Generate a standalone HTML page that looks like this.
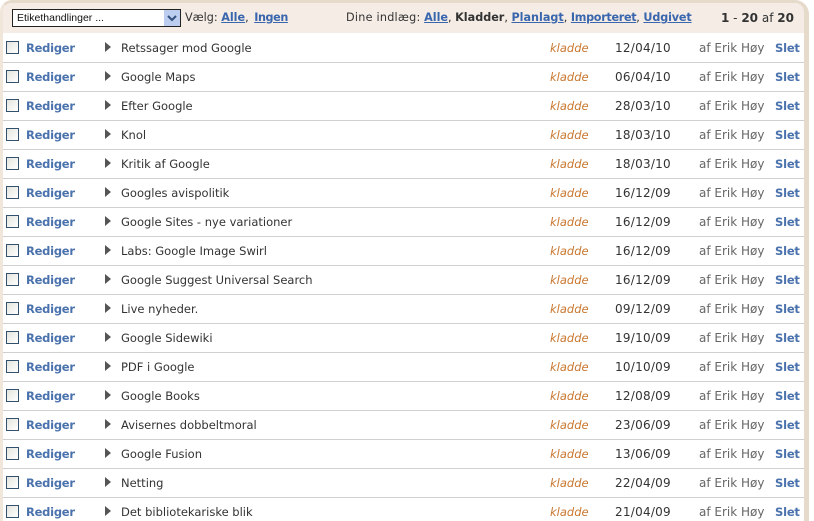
<!DOCTYPE html>
<html>
<head>
<meta charset="utf-8">
<style>
html,body{margin:0;padding:0;background:#fff;width:814px;height:521px;overflow:hidden;}
body{position:relative;font-family:"DejaVu Sans",sans-serif;font-size:11.2px;color:#333;}
.frame{position:absolute;left:0;top:0;width:809px;height:521px;box-sizing:border-box;border-style:solid;border-color:#e6dacb;border-width:3px 5px 0 3px;border-left-color:#f1e6da;border-radius:12px 14px 0 0;background:#fff;}
.head{position:absolute;left:3px;top:3px;width:801px;height:30px;background:#f4ece5;border-radius:9px 9px 0 0;}
.t{position:absolute;white-space:nowrap;line-height:14px;}
a{color:#3a66ad;font-weight:bold;text-decoration:underline;}
.sel{position:absolute;left:12px;top:9px;width:169px;height:18px;box-sizing:border-box;border:1px solid #222;background:#fff;font:10.5px "Liberation Sans",sans-serif;color:#111;line-height:16px;padding-left:4px;}
.sel svg{position:absolute;right:0;top:0;}
.row{position:absolute;left:3px;width:801px;height:28px;border-bottom:1px solid #d0d0d0;}
.cb{position:absolute;left:3px;top:7px;width:13px;height:13px;box-sizing:border-box;border:1px solid #33506e;background:linear-gradient(135deg,#e4e4de,#fff);}
.ed{position:absolute;left:23px;top:7px;font-size:11.5px;letter-spacing:-.25px;font-weight:bold;color:#4a72ad;line-height:14px;}
.ar{position:absolute;left:102px;top:8px;width:0;height:0;border-left:6px solid #555;border-top:5.5px solid transparent;border-bottom:5.5px solid transparent;}
.ti{position:absolute;left:118px;top:7px;font-size:11.5px;line-height:14px;color:#333;white-space:nowrap;}
.st{position:absolute;left:547px;top:7px;font-size:11.5px;line-height:14px;font-style:italic;color:#c9772f;}
.da{position:absolute;left:612px;top:7px;font-size:12px;letter-spacing:.25px;line-height:14px;color:#333;}
.au{position:absolute;left:696px;top:7px;font-size:12px;line-height:14px;color:#666;white-space:nowrap;}
.de{position:absolute;left:772px;top:7px;font-size:11.5px;letter-spacing:-.2px;line-height:14px;font-weight:bold;color:#4a72ad;}
</style>
</head>
<body>
<div class="frame"></div>
<div class="head"></div>
<div class="sel">Etikethandlinger ...<svg width="16" height="16"><rect width="16" height="16" fill="#bccdf0"/><path d="M4 6l4 4 4-4" fill="none" stroke="#34507f" stroke-width="2"/></svg></div>
<div class="t" style="left:185px;top:11px">Vælg: <a href="#">Alle</a>, <a href="#" style="margin-left:2px;letter-spacing:-.4px">Ingen</a></div>
<div class="t" style="left:346px;top:11px"><span style="letter-spacing:.25px">Dine indlæg:</span> <a href="#">Alle</a>, <b>Kladder</b>, <a href="#">Planlagt</a>, <a href="#" style="letter-spacing:-.3px">Importeret</a>, <a href="#" style="letter-spacing:-.15px">Udgivet</a></div>
<div class="t" style="left:721px;top:11px;font-size:12px"><b>1</b> - <b>20</b> af <b>20</b></div>

<div class="row" style="top:34px"><span class="cb"></span><span class="ed">Rediger</span><span class="ar"></span><span class="ti">Retssager mod Google</span><span class="st">kladde</span><span class="da">12/04/10</span><span class="au">af Erik Høy</span><span class="de">Slet</span></div>
<div class="row" style="top:63px"><span class="cb"></span><span class="ed">Rediger</span><span class="ar"></span><span class="ti">Google Maps</span><span class="st">kladde</span><span class="da">06/04/10</span><span class="au">af Erik Høy</span><span class="de">Slet</span></div>
<div class="row" style="top:92px"><span class="cb"></span><span class="ed">Rediger</span><span class="ar"></span><span class="ti">Efter Google</span><span class="st">kladde</span><span class="da">28/03/10</span><span class="au">af Erik Høy</span><span class="de">Slet</span></div>
<div class="row" style="top:121px"><span class="cb"></span><span class="ed">Rediger</span><span class="ar"></span><span class="ti">Knol</span><span class="st">kladde</span><span class="da">18/03/10</span><span class="au">af Erik Høy</span><span class="de">Slet</span></div>
<div class="row" style="top:150px"><span class="cb"></span><span class="ed">Rediger</span><span class="ar"></span><span class="ti">Kritik af Google</span><span class="st">kladde</span><span class="da">18/03/10</span><span class="au">af Erik Høy</span><span class="de">Slet</span></div>
<div class="row" style="top:179px"><span class="cb"></span><span class="ed">Rediger</span><span class="ar"></span><span class="ti">Googles avispolitik</span><span class="st">kladde</span><span class="da">16/12/09</span><span class="au">af Erik Høy</span><span class="de">Slet</span></div>
<div class="row" style="top:208px"><span class="cb"></span><span class="ed">Rediger</span><span class="ar"></span><span class="ti">Google Sites - nye variationer</span><span class="st">kladde</span><span class="da">16/12/09</span><span class="au">af Erik Høy</span><span class="de">Slet</span></div>
<div class="row" style="top:237px"><span class="cb"></span><span class="ed">Rediger</span><span class="ar"></span><span class="ti">Labs: Google Image Swirl</span><span class="st">kladde</span><span class="da">16/12/09</span><span class="au">af Erik Høy</span><span class="de">Slet</span></div>
<div class="row" style="top:266px"><span class="cb"></span><span class="ed">Rediger</span><span class="ar"></span><span class="ti">Google Suggest Universal Search</span><span class="st">kladde</span><span class="da">16/12/09</span><span class="au">af Erik Høy</span><span class="de">Slet</span></div>
<div class="row" style="top:295px"><span class="cb"></span><span class="ed">Rediger</span><span class="ar"></span><span class="ti">Live nyheder.</span><span class="st">kladde</span><span class="da">09/12/09</span><span class="au">af Erik Høy</span><span class="de">Slet</span></div>
<div class="row" style="top:324px"><span class="cb"></span><span class="ed">Rediger</span><span class="ar"></span><span class="ti">Google Sidewiki</span><span class="st">kladde</span><span class="da">19/10/09</span><span class="au">af Erik Høy</span><span class="de">Slet</span></div>
<div class="row" style="top:353px"><span class="cb"></span><span class="ed">Rediger</span><span class="ar"></span><span class="ti">PDF i Google</span><span class="st">kladde</span><span class="da">10/10/09</span><span class="au">af Erik Høy</span><span class="de">Slet</span></div>
<div class="row" style="top:382px"><span class="cb"></span><span class="ed">Rediger</span><span class="ar"></span><span class="ti">Google Books</span><span class="st">kladde</span><span class="da">12/08/09</span><span class="au">af Erik Høy</span><span class="de">Slet</span></div>
<div class="row" style="top:411px"><span class="cb"></span><span class="ed">Rediger</span><span class="ar"></span><span class="ti">Avisernes dobbeltmoral</span><span class="st">kladde</span><span class="da">23/06/09</span><span class="au">af Erik Høy</span><span class="de">Slet</span></div>
<div class="row" style="top:440px"><span class="cb"></span><span class="ed">Rediger</span><span class="ar"></span><span class="ti">Google Fusion</span><span class="st">kladde</span><span class="da">13/06/09</span><span class="au">af Erik Høy</span><span class="de">Slet</span></div>
<div class="row" style="top:469px"><span class="cb"></span><span class="ed">Rediger</span><span class="ar"></span><span class="ti">Netting</span><span class="st">kladde</span><span class="da">22/04/09</span><span class="au">af Erik Høy</span><span class="de">Slet</span></div>
<div class="row" style="top:498px"><span class="cb"></span><span class="ed">Rediger</span><span class="ar"></span><span class="ti">Det bibliotekariske blik</span><span class="st">kladde</span><span class="da">21/04/09</span><span class="au">af Erik Høy</span><span class="de">Slet</span></div>
</body>
</html>
